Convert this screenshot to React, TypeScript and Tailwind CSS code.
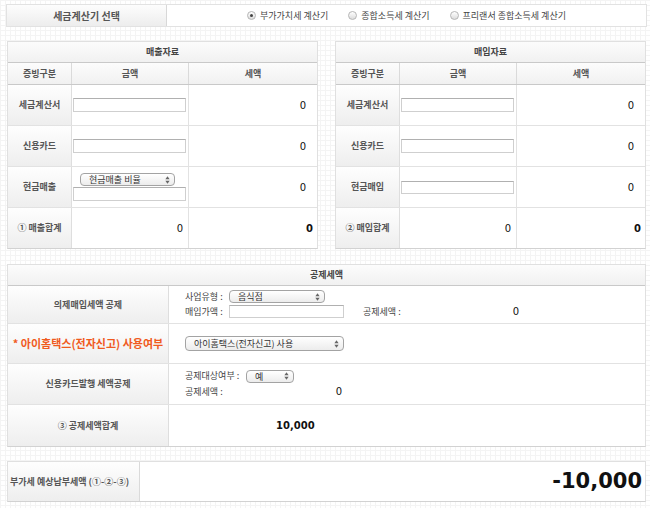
import React from "react";

const KR = "font-['Noto_Sans_CJK_KR','DejaVu_Sans',sans-serif]";
const NUM = "font-['DejaVu_Sans','Noto_Sans_CJK_KR',sans-serif]";

function Arrows() {
  return (
    <svg width="5" height="8" viewBox="0 0 5 8" className="shrink-0">
      <path d="M2.5 0.3 L4.6 3.2 L0.4 3.2 Z" fill="#666" />
      <path d="M2.5 7.7 L4.6 4.8 L0.4 4.8 Z" fill="#666" />
    </svg>
  );
}

function Select({ className, text }: { className: string; text: string }) {
  return (
    <div
      className={`flex items-center justify-between rounded-[4px] border border-[#a3a3a3] bg-[linear-gradient(#ffffff,#ececec)] pl-[8px] pr-[4px] text-[9px] leading-none text-[#333] ${className}`}
    >
      <span>{text}</span>
      <Arrows />
    </div>
  );
}

function Input({ className }: { className: string }) {
  return <div className={`border border-[#cfcfcf] border-t-[#b0b0b0] bg-white ${className}`} />;
}

function Radio({ on, label }: { on?: boolean; label: string }) {
  return (
    <div className="flex items-center gap-[4px]">
      <div className="flex h-[9px] w-[9px] items-center justify-center rounded-full border border-[#b5b5b5] bg-[linear-gradient(#ffffff,#dcdcdc)]">
        {on && <div className="h-[3px] w-[3px] rounded-full bg-[#444]" />}
      </div>
      <span className="text-[9px] text-[#444]">{label}</span>
    </div>
  );
}

const labelCell =
  "flex items-center justify-center bg-[linear-gradient(#fefefe,#eeeeee)] text-[9px] font-bold text-[#555]";

function DataRow({
  label,
  middle,
  tax,
  last,
}: {
  label: string;
  middle: React.ReactNode;
  tax: React.ReactNode;
  last?: boolean;
}) {
  return (
    <div className={`flex ${last ? "h-[40px]" : "h-[41px] border-b border-[#e2e2e2]"}`}>
      <div className={`${labelCell} w-[64px] border-r border-[#dedede]`}>{label}</div>
      <div className="flex w-[117px] flex-col justify-center border-r border-[#e2e2e2] pl-[1px]">{middle}</div>
      <div className="flex flex-1 items-center justify-end">{tax}</div>
    </div>
  );
}

function Panel({
  title,
  children,
}: {
  title: string;
  children: React.ReactNode;
}) {
  return (
    <div className="w-[311px] border border-[#e0e0e0] border-b-[#d2d2d2] bg-white">
      <div className="flex h-[21px] items-center justify-center border-b border-[#c9c9c9] bg-[linear-gradient(#fcfcfc,#f1f1f1)] text-[9px] font-bold text-[#444]">
        {title}
      </div>
      <div className="flex h-[22px] border-b border-[#c9c9c9] bg-[linear-gradient(#fcfcfc,#f1f1f1)] text-[9px] font-bold text-[#555]">
        <div className="flex w-[64px] items-center justify-center border-r border-[#dadada]">증빙구분</div>
        <div className="flex w-[117px] items-center justify-center border-r border-[#dadada]">금액</div>
        <div className="flex flex-1 items-center justify-center">세액</div>
      </div>
      {children}
    </div>
  );
}

const zero = <span className={`${NUM} pr-[11px] text-[10px] text-[#111]`}>0</span>;

export default function App() {
  return (
    <div
      className={`${KR} h-[508px] w-[650px] overflow-hidden bg-white bg-[linear-gradient(#f4f4f4_1px,transparent_1px),linear-gradient(90deg,#f4f4f4_1px,transparent_1px)] bg-[length:5px_5px] pt-[4px]`}
    >
      {/* top bar */}
      <div className="ml-[6px] flex h-[23px] w-[641px] border border-[#e2e2e2] bg-white">
        <div className="flex w-[160px] items-center justify-center border-r border-[#d8d8d8] bg-[linear-gradient(#fdfdfd,#ededed)] text-[10px] font-bold text-[#555]">
          세금계산기 선택
        </div>
        <div className="flex flex-1 items-center justify-center gap-[20px]">
          <Radio on label="부가가치세 계산기" />
          <Radio label="종합소득세 계산기" />
          <Radio label="프리랜서 종합소득세 계산기" />
        </div>
      </div>

      {/* panels */}
      <div className="ml-[7px] mt-[14px] flex gap-[17px]">
        <Panel title="매출자료">
          <DataRow label="세금계산서" middle={<Input className="h-[14px] w-[113px]" />} tax={zero} />
          <DataRow label="신용카드" middle={<Input className="h-[14px] w-[113px]" />} tax={zero} />
          <DataRow
            label="현금매출"
            middle={
              <div className="flex flex-col">
                <Select className="ml-[7px] h-[13px] w-[95px]" text="현금매출 비율" />
                <Input className="mt-[1px] h-[14px] w-[113px]" />
              </div>
            }
            tax={zero}
          />
          <DataRow
            last
            label="① 매출합계"
            middle={<span className={`${NUM} self-end pr-[5px] text-[10px] text-[#111]`}>0</span>}
            tax={<span className={`${NUM} pr-[4px] text-[10px] font-bold text-[#111]`}>0</span>}
          />
        </Panel>
        <Panel title="매입자료">
          <DataRow label="세금계산서" middle={<Input className="h-[14px] w-[113px]" />} tax={zero} />
          <DataRow label="신용카드" middle={<Input className="h-[14px] w-[113px]" />} tax={zero} />
          <DataRow label="현금매입" middle={<Input className="h-[13px] w-[113px]" />} tax={zero} />
          <DataRow
            last
            label="② 매입합계"
            middle={<span className={`${NUM} self-end pr-[5px] text-[10px] text-[#111]`}>0</span>}
            tax={<span className={`${NUM} pr-[4px] text-[10px] font-bold text-[#111]`}>0</span>}
          />
        </Panel>
      </div>

      {/* deduction */}
      <div className="ml-[7px] mt-[15px] w-[639px] border border-[#e0e0e0] border-b-[#d2d2d2] bg-white">
        <div className="flex h-[21px] items-center justify-center border-b border-[#c9c9c9] bg-[linear-gradient(#fcfcfc,#f1f1f1)] text-[9px] font-bold text-[#444]">
          공제세액
        </div>
        <div className="flex h-[38px] border-b border-[#e2e2e2]">
          <div className={`${labelCell} w-[161px] border-r border-[#dedede]`}>의제매입세액 공제</div>
          <div className="flex flex-1 flex-col justify-center gap-[1px] pl-[16px] text-[9px] text-[#444]">
            <div className="flex items-center">
              <span className="w-[44px]">사업유형 :</span>
              <Select className="h-[13px] w-[96px]" text="음식점" />
            </div>
            <div className="flex items-center">
              <span className="w-[44px]">매입가액 :</span>
              <Input className="h-[13px] w-[115px]" />
              <div className="ml-[19px] flex w-[156px] items-center justify-between">
                <span>공제세액 :</span>
                <span className={`${NUM} text-[10px] text-[#111]`}>0</span>
              </div>
            </div>
          </div>
        </div>
        <div className="flex h-[40px] border-b border-[#e2e2e2]">
          <div className="flex w-[161px] items-center justify-center border-r border-[#dedede] bg-[linear-gradient(#fefefe,#eeeeee)] text-[11px] font-bold text-[#f05a1e]">
            * 아이홈택스(전자신고) 사용여부
          </div>
          <div className="flex flex-1 items-center pl-[16px]">
            <Select className="h-[15px] w-[159px]" text="아이홈택스(전자신고) 사용" />
          </div>
        </div>
        <div className="flex h-[41px] border-b border-[#e2e2e2]">
          <div className={`${labelCell} w-[161px] border-r border-[#dedede]`}>신용카드발행 세액공제</div>
          <div className="flex flex-1 flex-col justify-center gap-[1px] pl-[16px] text-[9px] text-[#444]">
            <div className="flex items-center">
              <span className="w-[61px]">공제대상여부 :</span>
              <Select className="h-[13px] w-[48px]" text="예" />
            </div>
            <div className="flex w-[157px] items-center justify-between">
              <span>공제세액 :</span>
              <span className={`${NUM} text-[10px] text-[#111]`}>0</span>
            </div>
          </div>
        </div>
        <div className="flex h-[41px]">
          <div className={`${labelCell} w-[161px] border-r border-[#dedede]`}>③ 공제세액합계</div>
          <div className="flex flex-1 items-center pl-[107px]">
            <span className={`${NUM} text-[10px] font-bold text-[#111]`}>10,000</span>
          </div>
        </div>
      </div>

      {/* bottom */}
      <div className="ml-[7px] mt-[14px] flex h-[41px] w-[639px] border border-[#e0e0e0] border-b-[#d2d2d2] bg-white">
        <div className="flex w-[132px] items-center border-r border-[#dadada] bg-[linear-gradient(#fefefe,#eeeeee)] pl-[2px] text-[9px] font-bold text-[#555]">
          부가세 예상납부세액 (①-②-③)
        </div>
        <div className="flex flex-1 items-center justify-end pr-[3px]">
          <span className={`${NUM} text-[21px] font-bold text-[#111]`}>-10,000</span>
        </div>
      </div>
    </div>
  );
}
